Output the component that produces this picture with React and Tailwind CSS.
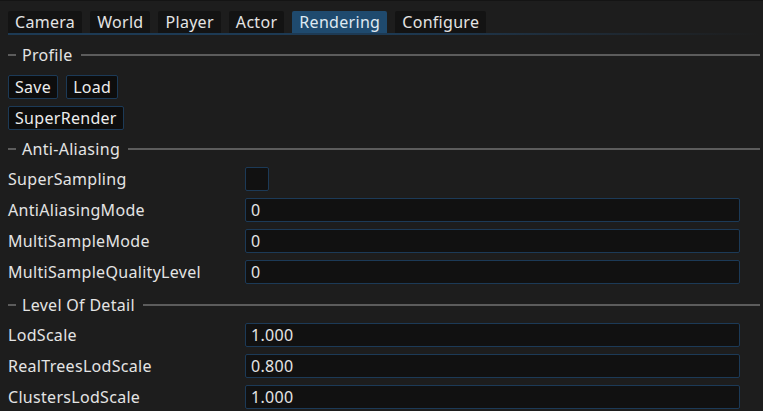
const tabs = ['Camera', 'World', 'Player', 'Actor', 'Rendering', 'Configure']

function Separator({ label }) {
  return (
    <div className="flex h-[22px] items-center gap-[6px]">
      <div className="h-[2px] w-[8px] bg-[#5c5c5c]" />
      <span className="leading-none">{label}</span>
      <div className="ml-[2px] h-[2px] flex-1 bg-[#5c5c5c]" />
    </div>
  )
}

function Button({ children }) {
  return (
    <button
      type="button"
      className="h-[24px] rounded-[2px] border border-[#1c3a57] bg-[#0d0d0d] px-[6px] leading-none text-[#ececec]"
    >
      {children}
    </button>
  )
}

function Row({ label, children }) {
  return (
    <div className="flex h-[24px] items-center">
      <span className="w-[237px] shrink-0 leading-none">{label}</span>
      {children}
    </div>
  )
}

function Field({ value }) {
  return (
    <div className="flex h-[24px] w-[495px] items-center rounded-[2px] border border-[#1c3a57] bg-[#111111] px-[5px] leading-none">
      {value}
    </div>
  )
}

export default function App() {
  return (
    <div
      className="h-[411px] w-[763px] overflow-hidden border-t border-[#141414] bg-[#1d1d1d] text-[16px] tracking-[0.3px] text-[#e4e4e4]"
      style={{ fontFamily: '"Noto Sans", "DejaVu Sans", sans-serif' }}
    >
      <div className="pl-[8px] pr-[3px]">
        <div className="flex gap-[8px] pt-[10px]">
          {tabs.map((t) => (
            <div
              key={t}
              className={
                t === 'Rendering'
                  ? 'flex h-[22px] items-center rounded-t-[2px] bg-[#1f4a6e] px-[7px] leading-none text-[#dfe9f2]'
                  : 'flex h-[22px] items-center rounded-t-[2px] bg-[#131313] px-[7px] leading-none'
              }
            >
              {t}
            </div>
          ))}
        </div>
        <div className="h-[2px] bg-gradient-to-r from-[#1d3a54] via-[#1d3a54] to-[#1d1d1d]" />
      </div>

      <div className="flex flex-col gap-[7px] pl-[8px] pr-[3px] pt-[9px]">
        <Separator label="Profile" />
        <div className="mt-[2px] flex gap-[8px]">
          <Button>Save</Button>
          <Button>Load</Button>
        </div>
        <div className="flex">
          <Button>SuperRender</Button>
        </div>
        <div className="mt-[1px]">
          <Separator label="Anti-Aliasing" />
        </div>
        <Row label="SuperSampling">
          <div className="h-[24px] w-[24px] rounded-[2px] border border-[#1c3a57] bg-[#111111]" />
        </Row>
        <Row label="AntiAliasingMode">
          <Field value="0" />
        </Row>
        <Row label="MultiSampleMode">
          <Field value="0" />
        </Row>
        <Row label="MultiSampleQualityLevel">
          <Field value="0" />
        </Row>
        <div className="mt-[3px]">
          <Separator label="Level Of Detail" />
        </div>
        <Row label="LodScale">
          <Field value="1.000" />
        </Row>
        <Row label="RealTreesLodScale">
          <Field value="0.800" />
        </Row>
        <Row label="ClustersLodScale">
          <Field value="1.000" />
        </Row>
      </div>
    </div>
  )
}
